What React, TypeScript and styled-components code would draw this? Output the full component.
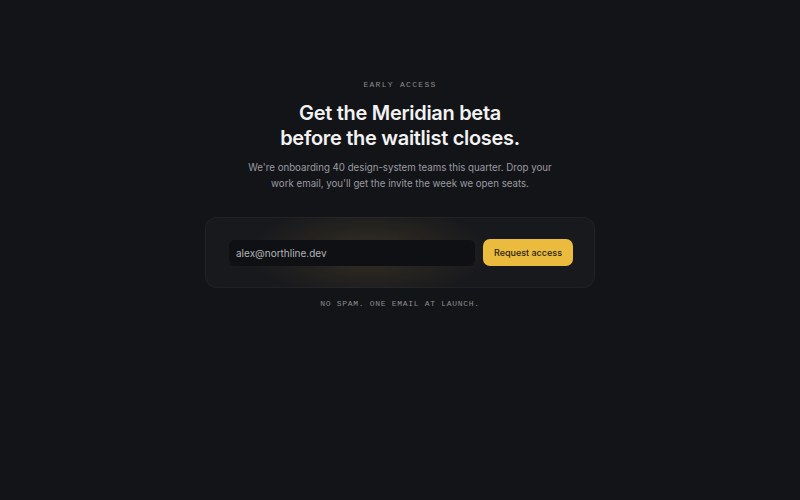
import React from 'react';
import styled, { createGlobalStyle } from 'styled-components';

const GlobalStyle = createGlobalStyle`
  html, body {
    margin: 0;
    padding: 0;
    background: #131418;
  }
  body {
    font-family: Inter, "Noto Sans", sans-serif;
    -webkit-font-smoothing: antialiased;
  }
`;

const Page = styled.main`
  min-height: 500px;
  display: flex;
  flex-direction: column;
  align-items: center;
  padding-top: 80px;
  box-sizing: border-box;
`;

const Eyebrow = styled.div`
  font-family: "Liberation Mono", "DejaVu Sans Mono", monospace;
  font-size: 8px;
  letter-spacing: 1.3px;
  color: #8b8c90;
  text-transform: uppercase;
`;

const Title = styled.h1`
  margin: 12px 0 0;
  font-size: 20px;
  line-height: 25px;
  font-weight: 600;
  letter-spacing: -0.3px;
  color: #f2f2f3;
  text-align: center;
`;

const Lede = styled.p`
  margin: 9px 0 0;
  max-width: 320px;
  font-size: 9.7px;
  line-height: 16px;
  color: #9a9ba0;
  text-align: center;
`;

const Card = styled.form`
  margin-top: 25px;
  width: 390px;
  box-sizing: border-box;
  padding: 21px 21px 21px 23px;
  display: flex;
  gap: 8px;
  align-items: center;
  border-radius: 12px;
  border: 1px solid rgba(255, 255, 255, 0.04);
  background:
    radial-gradient(ellipse 120px 48px at 42% 50%, rgba(214, 170, 70, 0.15), rgba(214, 170, 70, 0) 100%),
    #18191d;
`;

const EmailInput = styled.input`
  flex: 1;
  min-width: 0;
  height: 26px;
  box-sizing: border-box;
  padding: 0 7px;
  border: none;
  outline: none;
  border-radius: 6px;
  background: #0f1013;
  font-family: inherit;
  font-size: 10px;
  color: #b3b4b8;
`;

const SubmitButton = styled.button`
  height: 27px;
  padding: 0 11px;
  border: none;
  border-radius: 7px;
  background: #ebbb3d;
  color: #2a220f;
  font-family: inherit;
  font-size: 9px;
  font-weight: 500;
  cursor: pointer;
`;

const Footnote = styled.div`
  margin-top: 11px;
  font-family: "Liberation Mono", "DejaVu Sans Mono", monospace;
  font-size: 8px;
  letter-spacing: 0.7px;
  color: #8b8c90;
`;

export default function App() {
  return (
    <>
      <GlobalStyle />
      <Page>
        <Eyebrow>Early access</Eyebrow>
        <Title>
          Get the Meridian beta
          <br />
          before the waitlist closes.
        </Title>
        <Lede>
          We're onboarding 40 design-system teams this quarter. Drop your work email, you'll get
          the invite the week we open seats.
        </Lede>
        <Card onSubmit={(e) => e.preventDefault()}>
          <EmailInput type="email" defaultValue="alex@northline.dev" />
          <SubmitButton type="submit">Request access</SubmitButton>
        </Card>
        <Footnote>NO SPAM. ONE EMAIL AT LAUNCH.</Footnote>
      </Page>
    </>
  );
}
